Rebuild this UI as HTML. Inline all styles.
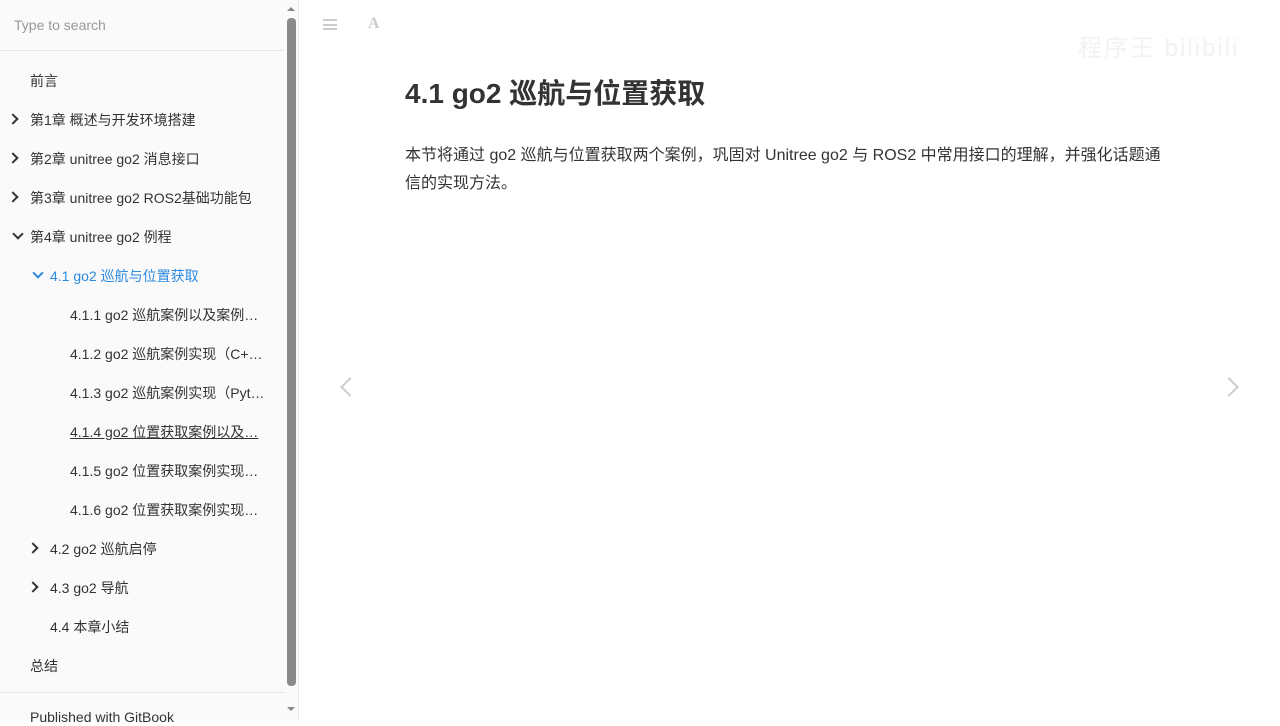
<!DOCTYPE html>
<html><head><meta charset="utf-8"><style>
*{margin:0;padding:0;box-sizing:border-box}
body{width:1280px;height:720px;overflow:hidden;background:#fff;font-family:"Liberation Sans","Noto Sans CJK SC",sans-serif;color:#333;position:relative}
#side{position:absolute;left:0;top:0;width:284px;height:720px;background:#fafafa}
#search{height:51px;border-bottom:1px solid #e5e5e5;padding:17px 14px;font-size:14px;color:#999}
.it{position:absolute;font-size:14px;color:#333;white-space:nowrap;margin-top:-1px}
.chev{position:absolute;width:8px;height:8px;border-right:2.5px solid #333;border-bottom:2.5px solid #333}
#sb{position:absolute;left:284px;top:0;width:15px;height:720px;background:#fafafa;border-right:1px solid #e8e8e8}
#thumb{position:absolute;left:287px;top:18px;width:9px;height:668px;background:#8a8a8a;border-radius:4px}
#foot{position:absolute;left:0;top:692px;width:284px;border-top:1px solid #e5e5e5;height:28px;padding:17px 30px;font-size:14px;color:#333}
h1{position:absolute;left:405px;top:72px;font-size:28px;font-weight:bold;color:#333}
p{position:absolute;left:405px;top:142px;width:770px;font-size:16px;line-height:28px;color:#333}
.arr{position:absolute;width:14px;height:14px;border-left:2px solid #ccc;border-bottom:2px solid #ccc}
</style></head><body>
<div id="side">
<div id="search">Type to search</div>
<div class="it" style="left:30px;top:72px">前言</div>
<div class="chev" style="left:9px;top:115px;transform:rotate(-45deg)"></div>
<div class="it" style="left:30px;top:111px">第1章 概述与开发环境搭建</div>
<div class="chev" style="left:9px;top:154px;transform:rotate(-45deg)"></div>
<div class="it" style="left:30px;top:150px">第2章 unitree go2 消息接口</div>
<div class="chev" style="left:9px;top:193px;transform:rotate(-45deg)"></div>
<div class="it" style="left:30px;top:189px">第3章 unitree go2 ROS2基础功能包</div>
<div class="chev" style="left:14px;top:230px;transform:rotate(45deg)"></div>
<div class="it" style="left:30px;top:228px">第4章 unitree go2 例程</div>
<div class="chev" style="left:34px;top:269px;transform:rotate(45deg);border-color:#2c8ae0"></div>
<div class="it" style="left:50px;top:267px;color:#2c8ae0">4.1 go2 巡航与位置获取</div>
<div class="it" style="left:70px;top:306px">4.1.1 go2 巡航案例以及案例…</div>
<div class="it" style="left:70px;top:345px">4.1.2 go2 巡航案例实现（C+…</div>
<div class="it" style="left:70px;top:384px">4.1.3 go2 巡航案例实现（Pyt…</div>
<div class="it" style="left:70px;top:423px;text-decoration:underline">4.1.4 go2 位置获取案例以及…</div>
<div class="it" style="left:70px;top:462px">4.1.5 go2 位置获取案例实现…</div>
<div class="it" style="left:70px;top:501px">4.1.6 go2 位置获取案例实现…</div>
<div class="chev" style="left:29px;top:544px;transform:rotate(-45deg)"></div>
<div class="it" style="left:50px;top:540px">4.2 go2 巡航启停</div>
<div class="chev" style="left:29px;top:583px;transform:rotate(-45deg)"></div>
<div class="it" style="left:50px;top:579px">4.3 go2 导航</div>
<div class="it" style="left:50px;top:618px">4.4 本章小结</div>
<div class="it" style="left:30px;top:657px">总结</div>
<div id="foot" style="padding-top:16px">Published with GitBook</div>
</div>
<div id="sb"></div>
<div id="thumb"></div>
<div style="position:absolute;left:287px;top:7px;border:4px solid transparent;border-bottom:4px solid #888;border-top:0"></div>
<div style="position:absolute;left:287px;top:707px;border:4px solid transparent;border-top:4px solid #888;border-bottom:0"></div>
<div style="position:absolute;left:323px;top:19px;width:14px;height:11px;border-top:2px solid #ccc;border-bottom:2px solid #ccc"><div style="margin-top:2.5px;height:2px;background:#ccc"></div></div>
<div style="position:absolute;left:368px;top:15px;font-family:'Liberation Serif',serif;font-weight:bold;font-size:16px;color:#ccc">A</div>
<h1>4.1 go2 巡航与位置获取</h1>
<p>本节将通过 go2 巡航与位置获取两个案例，巩固对 Unitree go2 与 ROS2 中常用接口的理解，并强化话题通信的实现方法。</p>
<div class="arr" style="left:343px;top:380px;transform:rotate(45deg)"></div>
<div class="arr" style="left:1222px;top:380px;transform:rotate(-135deg)"></div>
<div style="position:absolute;left:1078px;top:28px;font-size:24px;color:#f2f2f2;letter-spacing:2px">程序王 bilibili</div>
</body></html>
